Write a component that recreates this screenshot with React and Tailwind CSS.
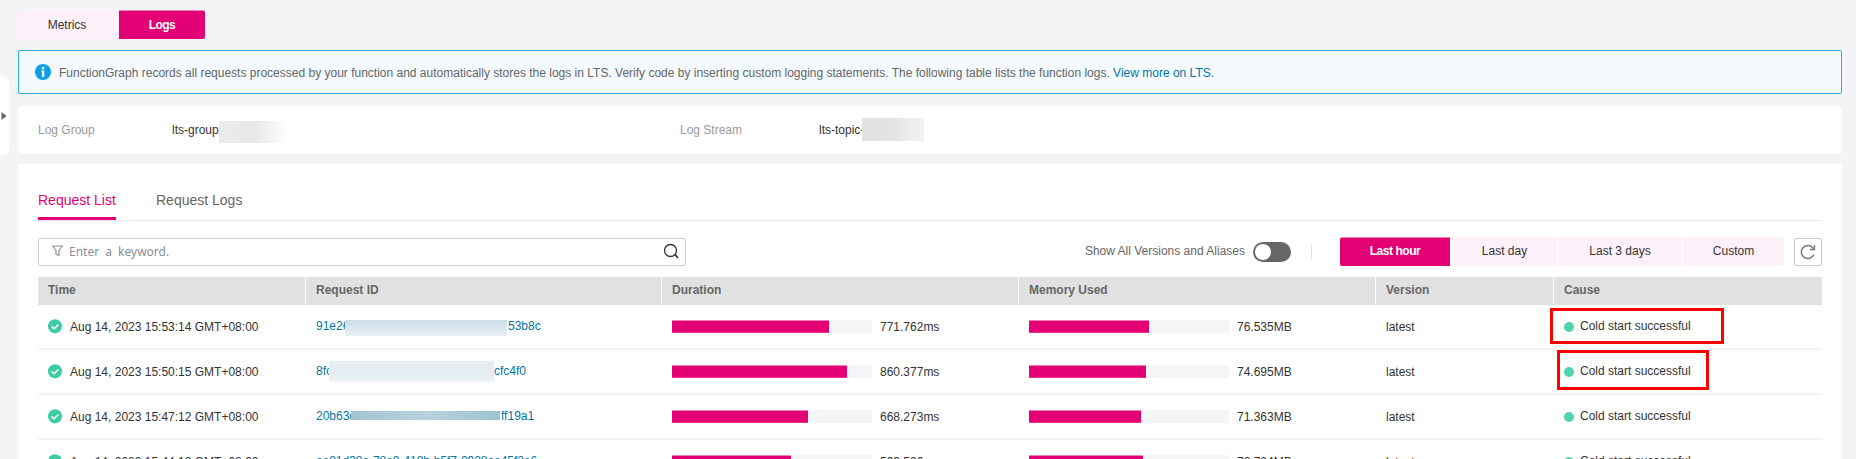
const T = ({ children, className = "" }) => (
  <span className={"whitespace-nowrap " + className}>{children}</span>
);

function CheckIcon() {
  return (
    <svg className="h-[15px] w-[14px] shrink-0" viewBox="0 0 14 15">
      <ellipse cx="7" cy="7.3" rx="7" ry="7.1" fill="#3dcca6" />
      <path d="M3.6 7.4 L6.1 9.8 L10.4 5.4" fill="none" stroke="#fff" strokeWidth="1.5" />
    </svg>
  );
}

const rows = [
  { time: "Aug 14, 2023 15:53:14 GMT+08:00", a: "91e26", aw: "w-[29px]", b: "53b8c", mask: "w-[162px] h-[16px] mt-[5px] mr-px bg-linear-to-b from-[#cbdfe7] to-[#e6eff4]", dur: "771.762ms", dw: 157, mem: "76.535MB", mw: 120 },
  { time: "Aug 14, 2023 15:50:15 GMT+08:00", a: "8fc", aw: "w-[13px]", b: "cfc4f0", mask: "w-[165px] h-[21px] mt-[2px] bg-linear-to-b from-[#e6eef2] via-[#e4ecf1] to-[#edf3f6]", dur: "860.377ms", dw: 175, mem: "74.695MB", mw: 117 },
  { time: "Aug 14, 2023 15:47:12 GMT+08:00", a: "20b63c", aw: "w-[35px]", b: "ff19a1", mask: "w-[149px] h-[9px] mr-px bg-linear-to-r from-[#a3c4d3] via-[#b7d2dd] to-[#9dc3d2]", dur: "668.273ms", dw: 136, mem: "71.363MB", mw: 112 },
  { time: "Aug 14, 2023 15:44:12 GMT+08:00", full: "ee81d38e-78e0-418b-b5f7-0928ee45f2e6", dur: "590.590ms", dw: 119, mem: "72.724MB", mw: 114 },
];

const grid = "grid grid-cols-[268px_356px_357px_357px_178px_268px]";

function Bar({ w, label }) {
  return (
    <div className="flex items-center pl-[10px]">
      <div className="h-[13px] w-[200px] bg-[#f4f5f7]">
        <div className="h-[13px] border-t border-b border-t-[#f080b8] border-b-[#e8308c] bg-[#e20074]" style={{ width: w }} />
      </div>
      <T className="ml-[8px]">{label}</T>
    </div>
  );
}

export default function App() {
  return (
    <div className="relative flex h-[459px] w-[1856px] flex-col overflow-hidden bg-[#f3f4f6] pl-[18px] pr-[14px] pt-[10px] font-['Liberation_Sans',Arial,sans-serif] text-[12px] leading-[18px] text-[#333]">
      <div className="absolute left-0 top-[76px] flex h-[80px] w-[10px] items-center rounded-r-[10px] bg-white">
        <svg className="ml-[1px] h-[8px] w-[6px]" viewBox="0 0 6 8"><path d="M0.5 0 L5.5 4 L0.5 8Z" fill="#666" /></svg>
      </div>

      <div className="flex h-[29px] shrink-0">
        <div className="flex w-[101px] items-center justify-center rounded-l-[2px] bg-[#fef0f8] pr-[3px]"><T>Metrics</T></div>
        <div className="flex w-[86px] items-center justify-center rounded-r-[2px] border-t border-[#f080b8] bg-[#e20074] font-bold text-white"><T className="tracking-[-0.6px]">Logs</T></div>
      </div>

      <div className="mt-[11px] flex h-[44px] shrink-0 items-center rounded-[2px] border border-[#2fb0e6] bg-[#f4faff] pl-[16px] text-[#666]">
        <svg className="h-[16px] w-[16px] shrink-0" viewBox="0 0 16 16">
          <circle cx="8" cy="8" r="8" fill="#0a9fe6" />
          <rect x="6.9" y="3" width="2.4" height="2.2" fill="#fff" />
          <path d="M6 6.4H9.3V13H6.9V7.6H6Z" fill="#fff" />
        </svg>
        <T className="ml-[8px] pt-[2px]">FunctionGraph records all requests processed by your function and automatically stores the logs in LTS. Verify code by inserting custom logging statements. The following table lists the function logs. <span className="text-[#0075a5]">View more on LTS.</span></T>
      </div>

      <div className="mt-[12px] flex h-[48px] shrink-0 items-center rounded-[3px] bg-white pl-[20px]">
        <div className="w-[134px] text-[#999]"><T>Log Group</T></div>
        <div className="flex w-[508px] items-center">
          <T className="w-[47px]">lts-group</T>
          <div className="mt-[4px] h-[22px] w-[71px] bg-linear-to-r from-[#ebebeb] from-0% via-[#e9e9e9] via-50% to-white" />
        </div>
        <div className="w-[139px] text-[#999]"><T>Log Stream</T></div>
        <T className="w-[43px]">lts-topic-</T>
        <div className="relative mb-px h-[23px] w-[62px] bg-linear-to-r from-[#e1e1e1] via-[#e3e3e3] to-[#f3f3f3]" />
      </div>

      <div className="mt-[10px] flex h-[310px] shrink-0 flex-col bg-white px-[20px]">
        <div className="flex h-[57px] shrink-0 gap-[40px] border-b border-[#e8e8e8] text-[14px]">
          <div className="flex h-[56px] w-[78px] items-end border-b-[3px] border-[#e20074] pb-[7px] leading-[20px] text-[#e20074]"><T>Request List</T></div>
          <div className="flex h-[56px] items-end pb-[10px] leading-[20px] text-[#666]"><T>Request Logs</T></div>
        </div>

        <div className="mt-[16px] flex h-[29px] shrink-0 items-center">
          <div className="flex h-[28px] w-[648px] items-center rounded-[2px] border border-[#cfcfcf] pl-[13px] pr-[6px]">
            <svg className="mb-[2px] h-[12px] w-[11px]" viewBox="0 0 11 12"><path d="M0.8 1H10.2L7 5.6V10.4L4 9.6V5.6Z" fill="none" stroke="#8a8e99" strokeWidth="1.1" /></svg>
            <T className="ml-[6px] font-['Noto_Sans',sans-serif] text-[#8a8e99] [word-spacing:3px]">Enter a keyword.</T>
            <svg className="mb-px ml-auto h-[16px] w-[16px]" viewBox="0 0 16 16"><g fill="none" stroke="#333" strokeWidth="1.3"><circle cx="7.5" cy="7.5" r="6" /><path d="M11.8 11.5L15 14.8" strokeWidth="1.7" /></g></svg>
          </div>
          <T className="ml-auto pb-[2px] text-[#666]">Show All Versions and Aliases</T>
          <div className="ml-[8px] flex h-[20px] w-[38px] items-center rounded-full bg-[#666] pl-[2px]"><div className="h-[16px] w-[16px] rounded-full bg-white" /></div>
          <div className="ml-[20px] h-[14px] w-px bg-[#dcdcdc]" />
          <div className="ml-[28px] flex h-[29px] gap-[2px]">
            <div className="flex w-[110px] items-center justify-center rounded-l-[2px] border-t border-[#f080b8] bg-[#e20074] pb-[2px] font-bold text-white"><T className="tracking-[-0.45px]">Last hour</T></div>
            <div className="flex w-[105px] items-center justify-center bg-[#fef0f8] pb-[2px]"><T>Last day</T></div>
            <div className="flex w-[122px] items-center justify-center bg-[#fef0f8] pb-[2px]"><T>Last 3 days</T></div>
            <div className="flex w-[101px] items-center justify-center rounded-r-[2px] bg-[#fef0f8] pb-[2px]"><T>Custom</T></div>
          </div>
          <div className="ml-[10px] flex h-[28px] w-[28px] items-center justify-center rounded-[2px] border border-[#c8c8c8]">
            <svg className="h-[16px] w-[16px]" viewBox="0 0 16 16"><g fill="none" stroke="#777" strokeWidth="1.5"><path d="M13.9 10.5A6.5 6.5 0 1 1 13.4 4.6" /><path d="M14.4 1.2V5.6H10" /></g></svg>
          </div>
        </div>

        <div className={grid + " mt-[11px] h-[28px] shrink-0 bg-[#e1e1e1] font-bold text-[#666]"}>
          {["Time", "Request ID", "Duration", "Memory Used", "Version", "Cause"].map((h, i) => (
            <div key={h} className={"mb-px flex items-center pl-[10px] pb-px " + (i < 5 ? "border-r border-white" : "")}><T>{h}</T></div>
          ))}
        </div>

        {rows.map((r) => (
          <div key={r.time} className={grid + " h-[45px] shrink-0 border-b-2 border-[#f3f3f4]"}>
            <div className="flex items-center pl-[10px]"><CheckIcon /><T className="ml-[8px]">{r.time}</T></div>
            <div className="flex items-center pb-[2px] pl-[10px] text-[#0075a5]">
              {r.full ? <T className="tracking-[-0.05px]">{r.full}</T> : (
                <>
                  <T className={r.aw}>{r.a}</T>
                  <div className={"relative shrink-0 " + r.mask} />
                  <T>{r.b}</T>
                </>
              )}
            </div>
            <Bar w={r.dw} label={r.dur} />
            <Bar w={r.mw} label={r.mem} />
            <div className="flex items-center pl-[10px]"><T>latest</T></div>
            <div className="flex items-center pl-[10px]">
              <div className="h-[10px] w-[10px] rounded-full bg-[#50d4ab]" />
              <T className="ml-[6px] pb-[2px]">Cold start successful</T>
            </div>
          </div>
        ))}
      </div>

      <div className="absolute left-[1550px] top-[308px] h-[36px] w-[174px] border-[3px] border-[#f00]" />
      <div className="absolute left-[1557px] top-[350px] h-[40px] w-[152px] border-[3px] border-[#f00]" />
    </div>
  );
}
